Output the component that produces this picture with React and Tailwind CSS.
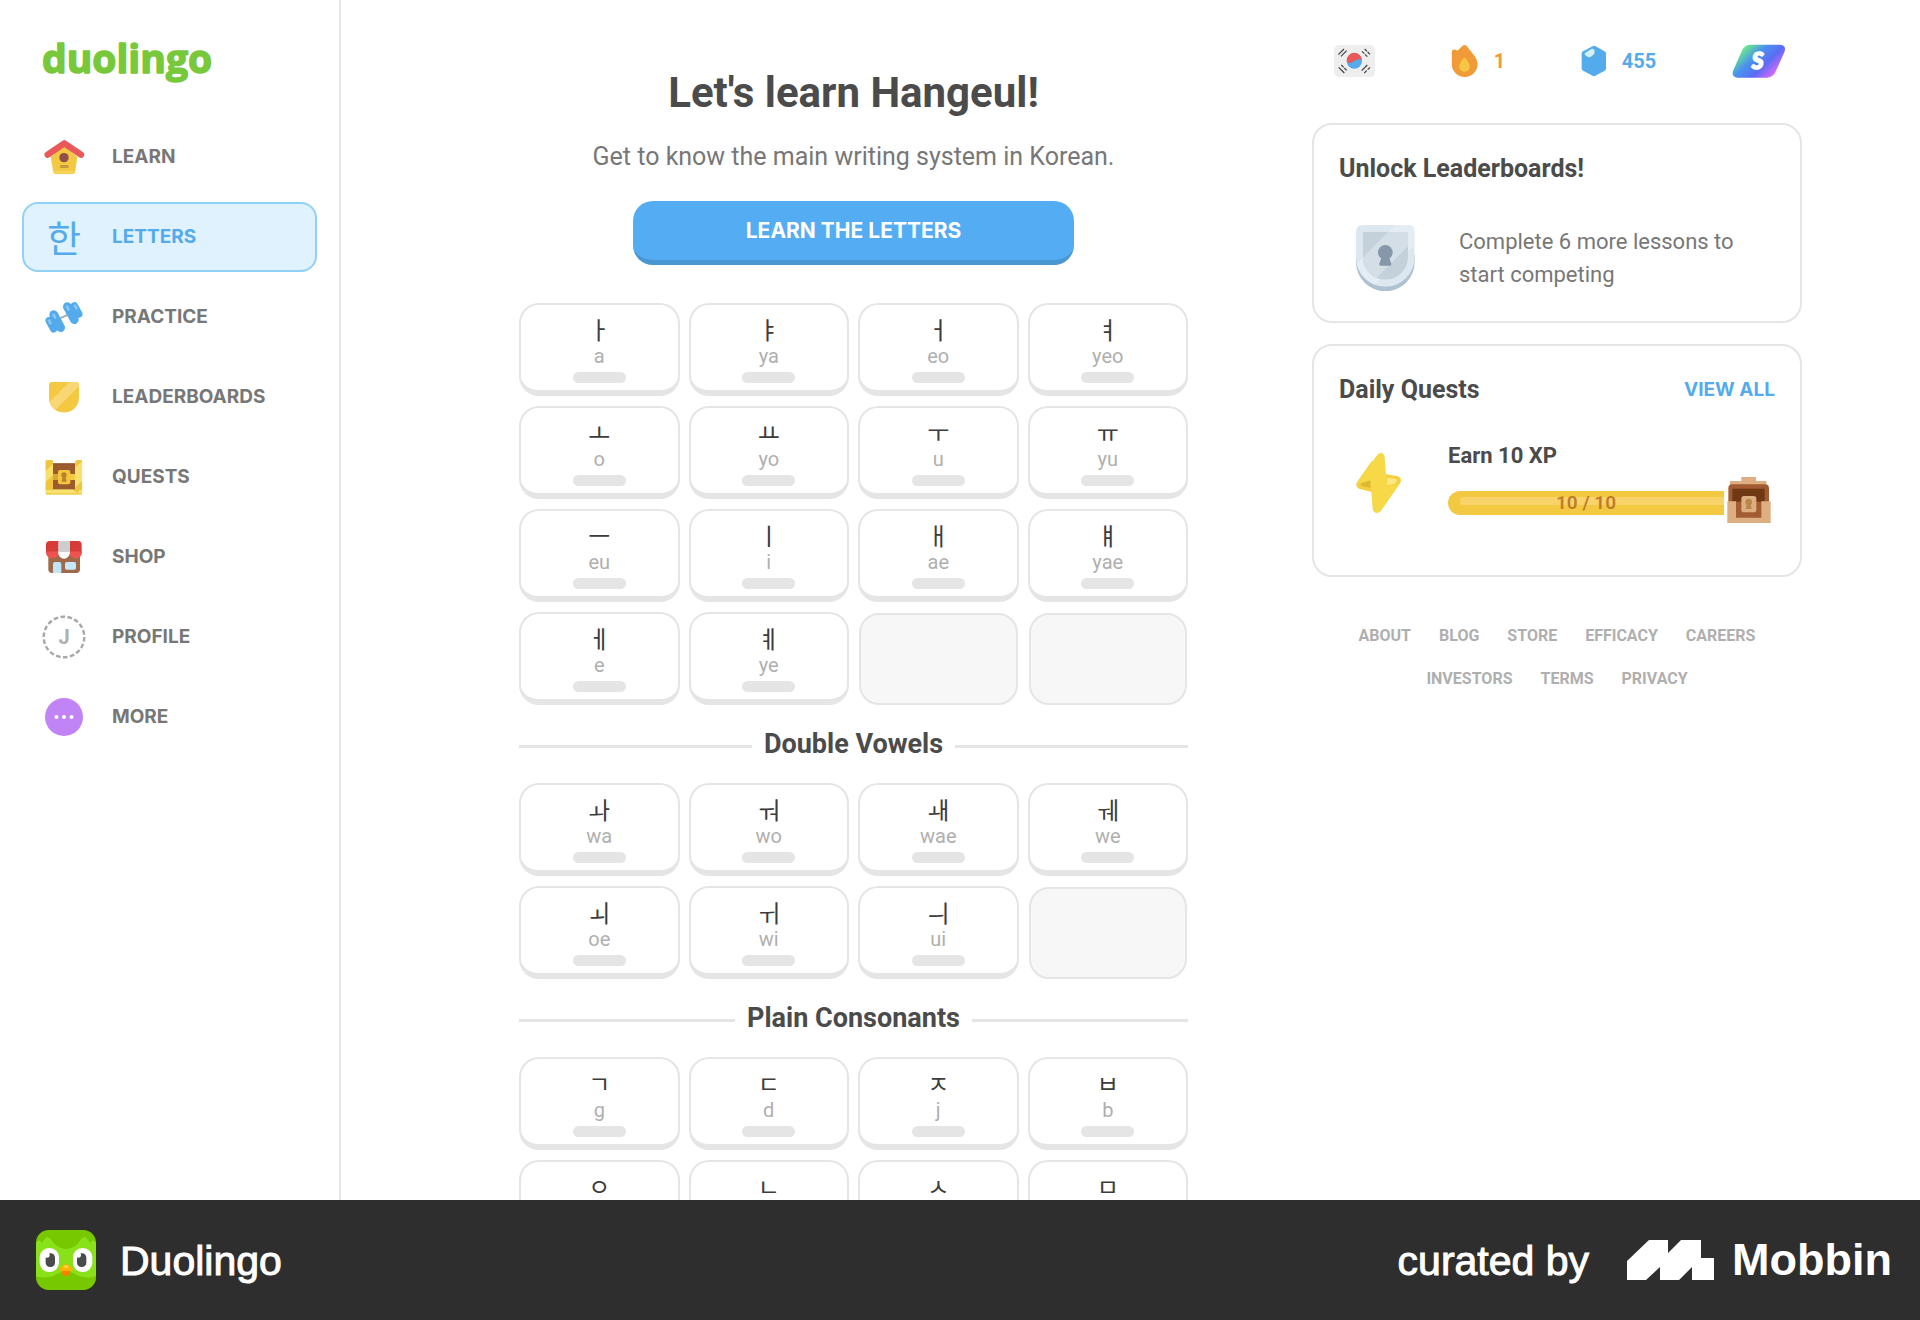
import React from "react";

const LearnIcon = () => (
  <svg className="size-11" viewBox="126 405 132 132" aria-hidden="true">
    <path d="M152 470 L192 438 L232 470 L226 512 Q225 522 215 522 H170 Q160 522 159 512 Z" fill="#f3c944" />
    <path d="M160 512 h66 q-2 10 -11 10 h-45 q-9 0 -10 -10z" fill="#f6d153" />
    <path d="M143 464 L193 430 L243 464" fill="none" stroke="#e9595a" strokeWidth="19" strokeLinecap="round" strokeLinejoin="round" />
    <circle cx="192" cy="473" r="14" fill="#8f4f4a" />
    <rect x="180" y="495" width="26" height="9" rx="4" fill="#c39a3d" />
  </svg>
);

const PracticeIcon = () => (
  <svg className="size-11" viewBox="126 885 132 132" aria-hidden="true">
    <path d="M178 956 L206 943" stroke="#a9a9a9" strokeWidth="6" />
    <g stroke="#54abec" strokeLinecap="round" fill="none">
      <path d="M148 962 L161 986" strokeWidth="23" />
      <path d="M161 944 L182 983" strokeWidth="26" />
      <path d="M202 920 L223 959" strokeWidth="26" />
      <path d="M223 918 L236 942" strokeWidth="23" />
    </g>
    <g stroke="#86c8f8" strokeWidth="8" strokeLinecap="round" fill="none">
      <path d="M147 962 l4 7" />
      <path d="M161 945 l4 7" />
      <path d="M201 920 l4 7" />
      <path d="M225 917 l4 7" />
    </g>
  </svg>
);

const LeaderboardsIcon = () => (
  <svg className="size-11" viewBox="126 75 132 132" aria-hidden="true">
    <defs>
      <clipPath id="gold-shield">
        <path d="M156 96 H228 Q237 96 237 105 V143 A45 45 0 0 1 147 143 V105 Q147 96 156 96Z" />
      </clipPath>
    </defs>
    <g clipPath="url(#gold-shield)">
      <rect x="140" y="90" width="104" height="104" fill="#f4c942" />
      <path d="M214 90 H244 V102 L166 180 L152 165 L147 158Z" fill="#f8d774" />
    </g>
  </svg>
);

const QuestsIcon = () => (
  <svg className="size-11" viewBox="126 315 132 132" aria-hidden="true">
    <defs>
      <clipPath id="gold-chest">
        <path d="M141 330 h14 q4 0 4 5 v5 h67 v-5 q0-5 4-5 h12 q5 0 5 5 v94 q0 5-5 5 h-101 q-5 0-5-5 v-94 q0-5 5-5z" />
      </clipPath>
    </defs>
    <g clipPath="url(#gold-chest)">
      <rect x="130" y="325" width="124" height="115" fill="#f8e06c" />
      <path d="M136 325 h23 v17 l-23 22z M136 396 l23 -20 v44 h-23z M226 325 h22 v8 l-22 20z M232 420 l16 -14 v14z M219 420 l29 -29 v18 l-16 20z" fill="#f0c53f" />
      <path d="M136 429 h112 v6 h-112z" fill="#f0cf55" />
      <rect x="159" y="339" width="66" height="33" fill="#9c5a2f" />
      <rect x="159" y="372" width="66" height="18" fill="#f2cc49" />
      <rect x="159" y="390" width="66" height="28" fill="#9c5a2f" />
      <path d="M159 339h66v6h-66zM159 372h15v18h-15z" fill="#8c4f2a" opacity=".3" />
    </g>
    <rect x="174" y="360" width="37" height="43" rx="6" fill="#f3c63c" />
    <circle cx="192" cy="375" r="8" fill="#b9812c" />
    <path d="M188 378 h8 l4 17 h-15z" fill="#b9812c" />
  </svg>
);

const ShopIcon = () => (
  <svg className="size-11" viewBox="126 555 132 132" aria-hidden="true">
    <path d="M145 612 h95 v46 q0 11 -11 11 h-73 q-11 0 -11 -11z" fill="#a06a4a" />
    <path d="M159 669 v-27 q0-6 6-6 h13 q6 0 6 6 v27z" fill="#bfe5f7" />
    <rect x="195" y="636" width="33" height="23" rx="5" fill="#c5e9fa" />
    <path d="M138 604 h38 v4 a18 16 0 0 1 -38 0z M209 604 h37 v4 a18 16 0 0 1 -37 0z" fill="#ee5350" />
    <path d="M149 573 h27 v32 h-38 v-20 q0-12 11-12z M209 573 h26 q10 0 10 12 v20 h-36z" fill="#d63b37" />
    <path d="M175 604 h34 v5 a17 17 0 0 1 -34 0z" fill="#ffffff" />
    <rect x="175" y="573" width="34" height="33" fill="#cecece" />
  </svg>
);

const ProfileIcon = () => (
  <span className="relative grid size-11 place-items-center text-[20px] font-bold text-[#afafaf]">
    <svg className="absolute inset-0 size-11" viewBox="0 0 44 44" aria-hidden="true">
      <circle cx="22" cy="22" r="20.300" fill="none" stroke="#a8a8a8" strokeWidth="2.400" pathLength="180" strokeDasharray="6.500 3.500" />
    </svg>
    J
  </span>
);

const MoreIcon = () => (
  <svg className="size-11" viewBox="0 0 44 44" aria-hidden="true">
    <circle cx="22" cy="22" r="19" fill="#c184f7" />
    <circle cx="14.500" cy="22" r="2" fill="#fff" />
    <circle cx="22" cy="22" r="2" fill="#fff" />
    <circle cx="29.500" cy="22" r="2" fill="#fff" />
  </svg>
);

const LettersIcon = () => (
  <span className="grid size-11 place-items-center font-['Noto_Sans_CJK_KR',sans-serif] text-[37px] leading-[44px] text-[#54abec]">
    한
  </span>
);

const NAV = [
  { label: "LEARN", Icon: LearnIcon },
  { label: "LETTERS", Icon: LettersIcon, active: true },
  { label: "PRACTICE", Icon: PracticeIcon },
  { label: "LEADERBOARDS", Icon: LeaderboardsIcon },
  { label: "QUESTS", Icon: QuestsIcon },
  { label: "SHOP", Icon: ShopIcon },
  { label: "PROFILE", Icon: ProfileIcon },
  { label: "MORE", Icon: MoreIcon },
];

const SECTIONS = [
  {
    cells: [
      ["ㅏ", "a"], ["ㅑ", "ya"], ["ㅓ", "eo"], ["ㅕ", "yeo"],
      ["ㅗ", "o"], ["ㅛ", "yo"], ["ㅜ", "u"], ["ㅠ", "yu"],
      ["ㅡ", "eu"], ["ㅣ", "i"], ["ㅐ", "ae"], ["ㅒ", "yae"],
      ["ㅔ", "e"], ["ㅖ", "ye"], null, null,
    ],
  },
  {
    title: "Double Vowels",
    cells: [
      ["ㅘ", "wa"], ["ㅝ", "wo"], ["ㅙ", "wae"], ["ㅞ", "we"],
      ["ㅚ", "oe"], ["ㅟ", "wi"], ["ㅢ", "ui"], null,
    ],
  },
  {
    title: "Plain Consonants",
    cells: [
      ["ㄱ", "g"], ["ㄷ", "d"], ["ㅈ", "j"], ["ㅂ", "b"],
      ["ㅇ", "ng"], ["ㄴ", "n"], ["ㅅ", "s"], ["ㅁ", "m"],
    ],
  },
];

function Sidebar() {
  return (
    <aside className="flex w-[341px] shrink-0 flex-col border-r-2 border-[#e5e5e5] px-[22px] pt-8">
      <a href="#home" aria-label="duolingo" className="ml-5 block">
        <svg className="block h-[60px] w-[190px] font-['Open_Sans',sans-serif] text-[39px] font-bold" viewBox="0 0 190 60">
          <text x="0" y="41" fill="#78c83c" stroke="#78c83c" strokeWidth="1.500" strokeLinejoin="round">
            duolingo
          </text>
        </svg>
      </a>
      <nav className="mt-[30px] flex flex-col gap-[10px]">
        {NAV.map(({ label, Icon, active }) => (
          <a
            key={label}
            href={"#" + label.toLowerCase()}
            className={
              active
                ? "flex h-[70px] items-center gap-[26px] rounded-2xl border-2 border-[#90d1f7] bg-[#e0f2fe] px-[18px] text-[#54abec]"
                : "flex h-[70px] items-center gap-[26px] rounded-2xl border-2 border-transparent px-[18px] text-[#777777]"
            }
          >
            <Icon />
            <span className="font-['Inter',sans-serif] text-[19px] leading-7 font-bold">{label}</span>
          </a>
        ))}
      </nav>
    </aside>
  );
}

function LetterCard({ cell }) {
  if (!cell) {
    return <div className="mx-px mt-px h-[92px] rounded-[20px] border-2 border-[#e5e5e5] bg-[#f7f7f7]" />;
  }
  return (
    <button
      type="button"
      className="flex h-[93px] flex-col items-center rounded-[20px] border-2 border-b-[6px] border-[#e5e5e5] bg-white pt-[10px]"
    >
      <span className="font-['Noto_Sans_CJK_KR',sans-serif] text-[24px] leading-[28px] text-[#3c3c3c]">{cell[0]}</span>
      <span className="text-[20px] leading-[26px] text-[#afafaf]">{cell[1]}</span>
      <span className="mt-[3px] h-[11px] w-[53px] rounded-full bg-[#e5e5e5]" />
    </button>
  );
}

function Letters() {
  return (
    <main className="flex min-w-0 flex-1 flex-col pt-[69px]">
      <h1 className="text-center text-[42px] leading-[48px] font-bold text-[#4b4b4b]">Let's learn Hangeul!</h1>
      <p className="mt-6 text-center text-[25px] leading-8 text-[#777777]">
        Get to know the main writing system in Korean.
      </p>
      <button
        type="button"
        className="mt-7 mb-[38px] h-16 w-[441px] shrink-0 self-center rounded-[20px] border-b-[5px] border-[#4896d2] bg-[#54adf2] font-['Inter',sans-serif] text-[21px] font-bold text-white"
      >
        LEARN THE LETTERS
      </button>
      {SECTIONS.map((section, i) => (
        <section key={i}>
          {section.title && (
            <div className="flex h-[78px] items-center gap-3">
              <span className="mt-1 h-[3px] flex-1 bg-[#e5e5e5]" />
              <h2 className="text-[27px] leading-8 font-bold text-[#4b4b4b]">{section.title}</h2>
              <span className="mt-1 h-[3px] flex-1 bg-[#e5e5e5]" />
            </div>
          )}
          <div className="grid grid-cols-4 gap-x-[9px] gap-y-[10px]">
            {section.cells.map((cell, j) => (
              <LetterCard key={j} cell={cell} />
            ))}
          </div>
        </section>
      ))}
    </main>
  );
}

const Flag = () => (
  <svg className="h-8 w-[41px]" viewBox="103 76 123 96" role="img" aria-label="Korean">
    <rect x="103" y="76" width="123" height="96" rx="16" fill="#efeeee" />
    <circle cx="164" cy="124" r="23" fill="#54abec" />
    <path d="M141 124 A23 23 0 0 1 187 121 C180 117 171 118 164 124 C156 131 147 132 141 124Z" fill="#e9595a" />
    <g stroke="#3f3f3f" strokeWidth="3.500">
      <path d="M116 105 l17 -17 M124 110 l17 -17" />
      <path d="M195 88 l7 7 M204 97 l7 7 M187 95 l7 7 M196 104 l7 7" />
      <path d="M117 143 l17 17 M125 136 l7 7 M134 145 l7 7" />
      <path d="M186 153 l17 -17 M194 160 l7 -7 M204 150 l7 -7" />
    </g>
  </svg>
);

const Flame = () => (
  <svg className="h-8 w-[27px]" viewBox="455 76 81 97" aria-hidden="true">
    <path d="M496 76 Q501 76 504 81 L526 109 Q535 121 535 134 A39 39 0 0 1 457 134 V96 Q458 89 465 90 L475 93 L488 80 Q492 76 496 76Z" fill="#f19b38" />
    <path d="M496 115 Q498 115 500 118 L508 130 Q513 138 511 146 Q507 157 496 157 Q484 157 480 146 Q478 138 483 130 L491 118 Q494 115 496 115Z" fill="#f6c644" />
  </svg>
);

const Gem = () => (
  <svg className="h-8 w-[26px]" viewBox="847 76 78 96" aria-hidden="true">
    <path d="M886 84 L916 101 V147 L886 164 L855 147 V101Z" fill="#54abec" stroke="#54abec" strokeWidth="12" strokeLinejoin="round" />
    <path d="M859 100 L878 88 Q884 86 887 91 L888 98 Q888 102 884 105 L876 112 Q872 114 868 112 L860 107 Q856 103 859 100Z" fill="#d4effd" />
  </svg>
);

const SuperBadge = () => (
  <svg className="h-[34px] w-[54px]" viewBox="1299 73 162 102" role="img" aria-label="Super">
    <defs>
      <linearGradient id="super" gradientUnits="userSpaceOnUse" x1="1335" y1="78" x2="1425" y2="172">
        <stop offset="0" stopColor="#6df57c" />
        <stop offset="0.350" stopColor="#4a93ee" />
        <stop offset="0.650" stopColor="#5b6cf5" />
        <stop offset="1" stopColor="#e868fb" />
      </linearGradient>
    </defs>
    <path d="M1352 75 H1442 Q1464 76 1456 98 L1429 158 Q1422 173 1405 174 H1316 Q1295 172 1303 152 L1330 90 Q1337 76 1352 75Z" fill="url(#super)" />
    <text
      x="1376"
      y="148"
      textAnchor="middle"
      fontFamily="Lato, sans-serif"
      fontSize="68"
      fontWeight="900"
      fontStyle="italic"
      fill="#fff"
      stroke="#fff"
      strokeWidth="5"
      strokeLinejoin="round"
    >
      S
    </text>
  </svg>
);

const LockShield = () => (
  <svg className="h-[66px] w-[59px] shrink-0" viewBox="168 611 177 198" aria-hidden="true">
    <defs>
      <clipPath id="shield-outer">
        <path d="M190 611 H322 Q344 611 344 633 V708 A88 88 0 0 1 168 708 V633 Q168 611 190 611Z" />
      </clipPath>
      <clipPath id="shield-inner">
        <path d="M194 632 H318 Q324 632 324 638 V706 A68 69 0 0 1 188 706 V638 Q188 632 194 632Z" />
      </clipPath>
    </defs>
    <path d="M168 700 H344 V722 A88 88 0 0 1 168 722Z" fill="#aec2d2" />
    <g clipPath="url(#shield-outer)">
      <rect x="165" y="608" width="182" height="192" fill="#dce7f0" />
      <path d="M286 611 L165 732 V760 L215 800 L347 668 V611Z" fill="#e4edf4" />
    </g>
    <g clipPath="url(#shield-inner)">
      <rect x="185" y="630" width="142" height="148" fill="#c4d0da" />
      <path d="M266 630 H327 V672 L230 770 L190 740 L185 712Z" fill="#d3dee7" />
    </g>
    <circle cx="256" cy="693" r="22" fill="#8597a9" />
    <path d="M246 704 H266 L274 727 Q275 733 269 733 H243 Q237 733 238 727Z" fill="#8597a9" />
  </svg>
);

const Bolt = () => (
  <svg className="h-[60px] w-[45px] shrink-0" viewBox="167 367 135 180" aria-hidden="true">
    <path d="M258 431 L293 437 Q307 443 299 458 L250 527 L214 484 L176 474 Q162 467 172 452 L215 390Z" fill="#f4cf3f" />
    <path d="M231 373 Q239 363 248 369 Q253 373 253 380 L258 446 L259 500 L243 539 Q236 549 225 546 Q217 543 217 534 L213 484 L208 450 L182 443Z" fill="#f7d948" />
    <path d="M168 462 L231 373 L245 380 L210 450 L180 456Z M299 458 L243 539 L230 520 L259 465 L286 462Z" fill="#f7d948" />
    <path d="M261 441 L286 445 Q292 448 288 454 L282 460 L260 463Z" fill="#fbe987" />
    <path d="M210 449 L184 458 Q178 463 185 466 L211 472Z" fill="#dfb833" />
  </svg>
);

const Chest = () => (
  <svg className="h-[46px] w-11 shrink-0" viewBox="1280 441 132 138" aria-hidden="true">
    <path d="M1323 441 h44 v12 h31 v14 h-109 v-14 h34z" fill="#dcae82" />
    <path d="M1296 463 h98 q12 0 12 12 v45 h-122 v-45 q0-12 12-12z" fill="#a35c31" />
    <rect x="1296" y="476" width="97" height="42" fill="#6f3914" />
    <rect x="1300" y="515" width="90" height="62" fill="#a35c31" />
    <path d="M1281 514 h26 v49 h76 v-49 h28 v65 h-130z" fill="#dcae82" />
    <rect x="1323" y="498" width="45" height="49" rx="8" fill="#dcae82" />
    <circle cx="1345" cy="516" r="10" fill="#b98749" />
    <path d="M1340 520 h11 l3 17 h-18z" fill="#b98749" />
  </svg>
);

const LINKS = ["ABOUT", "BLOG", "STORE", "EFFICACY", "CAREERS", "INVESTORS", "TERMS", "PRIVACY"];

function RightRail() {
  return (
    <aside className="flex w-[490px] shrink-0 flex-col pt-[41px]">
      <div className="flex h-10 items-center justify-between pr-4 pl-[22px]">
        <Flag />
        <div className="flex items-center gap-4 text-[20px] font-bold text-[#f19b38]">
          <Flame />
          <span>1</span>
        </div>
        <div className="flex items-center gap-[15px] text-[20px] font-bold text-[#54abec]">
          <Gem />
          <span>455</span>
        </div>
        <SuperBadge />
      </div>

      <section className="mt-[42px] flex h-[200px] flex-col rounded-[20px] border-2 border-[#e5e5e5] px-[25px] pt-7">
        <h2 className="text-[25px] leading-8 font-bold text-[#4b4b4b]">Unlock Leaderboards!</h2>
        <div className="mt-10 flex items-center pl-[17px]">
          <LockShield />
          <p className="ml-11 text-[22px] leading-[33px] text-[#777777]">Complete 6 more lessons to start competing</p>
        </div>
      </section>

      <section className="mt-[21px] h-[233px] rounded-[20px] border-2 border-[#e5e5e5] px-[25px] pt-7">
        <div className="flex items-center justify-between">
          <h2 className="text-[25px] leading-8 font-bold text-[#4b4b4b]">Daily Quests</h2>
          <a href="#quests" className="font-['Inter',sans-serif] text-[19px] font-bold text-[#54abec]">
            VIEW ALL
          </a>
        </div>
        <div className="mt-9 flex items-start pl-[17px]">
          <div className="mt-[11px]">
            <Bolt />
          </div>
          <div className="ml-[47px] flex-1">
            <h3 className="text-[22px] leading-7 font-bold text-[#4b4b4b]">Earn 10 XP</h3>
            <div className="mt-[7px] flex items-end gap-[3px] pr-1">
              <div className="relative mb-2 flex h-6 flex-1 items-center justify-center rounded-l-full bg-[#f4c942]">
                <span className="absolute inset-x-0 top-[6px] ml-3 h-2 rounded-l-full bg-[#f7d36a]" />
                <span className="relative text-[19px] leading-6 font-semibold text-[#c07c28]">10 / 10</span>
              </div>
              <Chest />
            </div>
          </div>
        </div>
      </section>

      <nav className="mt-[38px] flex flex-wrap justify-center gap-x-7 gap-y-[9px] px-8 py-1 text-[16px] leading-[34px] font-bold text-[#afafaf]">
        {LINKS.map((link) => (
          <a key={link} href={"#" + link.toLowerCase()}>
            {link}
          </a>
        ))}
      </nav>
    </aside>
  );
}

function Footer() {
  return (
    <footer className="z-10 flex h-[120px] shrink-0 items-center justify-between bg-[#2e2e2e] pr-[28px] pl-9 font-['Liberation_Sans',sans-serif] text-[41px] text-white">
      <div className="flex items-center gap-6">
        <svg className="size-[60px]" viewBox="108 150 180 180" aria-hidden="true">
          <defs>
            <clipPath id="app-icon">
              <rect x="108" y="150" width="180" height="180" rx="38" />
            </clipPath>
          </defs>
          <g clipPath="url(#app-icon)">
            <rect x="108" y="150" width="180" height="180" fill="#78c800" />
            <path d="M100 196 L116 180 L126 188 L140 170 L152 176 Q168 204 198 208 Q228 204 244 176 L256 170 L270 188 L280 180 L296 196 V284 Q270 298 236 288 Q198 262 160 288 Q126 298 100 284Z" fill="#89e219" />
            <rect x="119" y="204" width="58" height="72" rx="28" fill="#fff" />
            <rect x="219" y="204" width="58" height="72" rx="28" fill="#fff" />
            <rect x="137" y="220" width="28" height="41" rx="13" fill="#4b4b4b" />
            <rect x="231" y="220" width="28" height="41" rx="13" fill="#4b4b4b" />
            <circle cx="141" cy="225" r="8" fill="#fff" />
            <circle cx="235" cy="225" r="8" fill="#fff" />
            <path d="M184 270 h28 l-3 14 q-11 8 -22 0z" fill="#f58300" />
            <path d="M198 252 Q208 254 218 266 Q219 272 212 273 H184 Q177 272 178 266 Q188 254 198 252Z" fill="#ffb100" />
            <ellipse cx="198" cy="260" rx="8" ry="5" fill="#ffd43a" />
          </g>
        </svg>
        <span className="mt-1 [-webkit-text-stroke:1px_white]">Duolingo</span>
      </div>
      <div className="flex items-center">
        <span className="mt-1 [-webkit-text-stroke:1px_white]">curated by</span>
        <svg className="ml-[38px] h-10 w-[87px]" viewBox="0 0 87 40" aria-hidden="true">
          <path d="M0 21 L22 0 H41 V13 L54 0 H74 V18 H87 V40 H65 V27 L52 40 H33 V27 L19 40 H0Z" fill="#fff" />
        </svg>
        <span className="ml-[18px] text-[45px] font-bold">Mobbin</span>
      </div>
    </footer>
  );
}

export default function App() {
  return (
    <div className="flex h-screen flex-col bg-white font-['Roboto',sans-serif]">
      <div className="flex min-h-0 flex-1 overflow-hidden">
        <Sidebar />
        <div className="flex min-w-0 flex-1 gap-[124px] pr-[118px] pl-[178px]">
          <Letters />
          <RightRail />
        </div>
      </div>
      <Footer />
    </div>
  );
}
